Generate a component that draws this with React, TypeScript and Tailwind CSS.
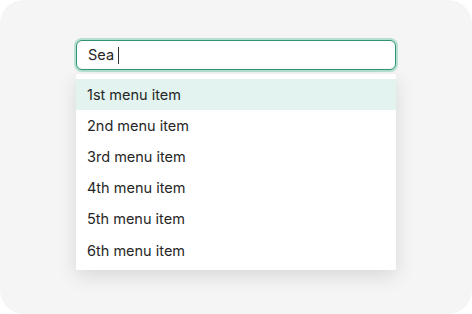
const items = [
  "1st menu item",
  "2nd menu item",
  "3rd menu item",
  "4th menu item",
  "5th menu item",
  "6th menu item",
];

export default function App() {
  return (
    <div className="w-[472px] h-[314px] bg-white">
      <div
        className="w-full h-full rounded-[24px] bg-[#f5f5f5] pt-[40px] px-[76px]"
        style={{ fontFamily: "Inter, 'Noto Sans', sans-serif" }}
      >
        <div className="h-[30px] rounded-[6px] border border-[#2f9478] bg-white ring-2 ring-[#b5e0d2] flex items-center px-[11px] text-[14.5px] text-[#262626]">
          <span className="whitespace-pre">Sea </span>
          <span className="w-px h-[17px] bg-[#333333]"></span>
        </div>
        <div className="mt-[4px] bg-white pt-[5px] pb-[4px] shadow-[0_6px_20px_rgba(0,0,0,0.12)] rounded-[2px]">
          {items.map((item, i) => (
            <div
              key={item}
              className={
                "h-[31.2px] flex items-center px-[11px] text-[14.5px] text-[#262626] " +
                (i === 0 ? "bg-[#e3f3ef]" : "")
              }
            >
              {item}
            </div>
          ))}
        </div>
      </div>
    </div>
  );
}
